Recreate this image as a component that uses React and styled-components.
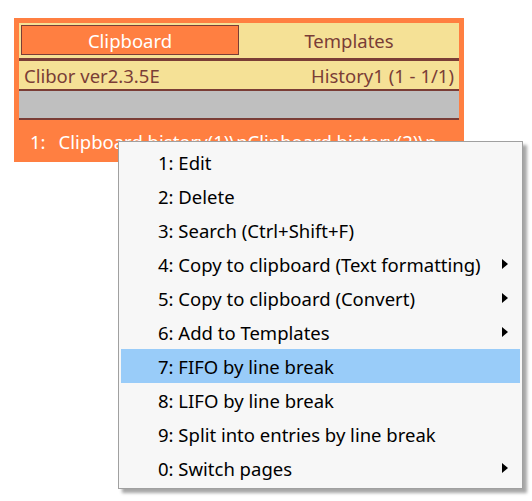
import React from 'react';
import styled, { createGlobalStyle } from 'styled-components';

const GlobalStyle = createGlobalStyle`
  body {
    margin: 0;
    background: #ffffff;
    font-family: "Noto Sans", "Liberation Sans", sans-serif;
  }
`;

const Page = styled.div`
  position: relative;
  width: 532px;
  height: 501px;
  padding: 18px 0 0 14px;
  box-sizing: border-box;
`;

const Window = styled.div`
  width: 450px;
  height: 144px;
  background: #ff7f41;
  padding: 5px 5px 0 5px;
  box-sizing: border-box;
  overflow: hidden;
`;

const TabRow = styled.div`
  display: grid;
  grid-template-columns: 218px 1fr;
  height: 35px;
  padding: 2px 0 3px 2px;
  box-sizing: border-box;
  background: #f5e196;
`;

const Tab = styled.div`
  display: flex;
  align-items: center;
  justify-content: center;
  font-size: 18.5px;
  color: ${p => (p.active ? '#ffffff' : '#7a3d36')};
  background: ${p => (p.active ? '#ff7f41' : 'transparent')};
  border: 1px solid ${p => (p.active ? '#7a3d36' : 'transparent')};
`;

const Rule = styled.div`
  height: ${p => p.h}px;
  background: #7a3d36;
`;

const InfoRow = styled.div`
  display: flex;
  justify-content: space-between;
  align-items: center;
  height: 28px;
  padding: 0 5px;
  background: #f5e196;
  color: #7a3d36;
  font-size: 18.5px;
`;

const SearchBar = styled.div`
  height: 27px;
  background: #bfbfbf;
`;

// first history entry; the context menu sits over its lower half
const Entry = styled.div`
  display: flex;
  gap: 13px;
  padding: 9px 0 0 11px;
  color: #ffffff;
  font-size: 18.5px;
  white-space: nowrap;
`;

const Menu = styled.div`
  position: absolute;
  left: 118px;
  top: 141px;
  width: 405px;
  padding: 3px 2px;
  box-sizing: border-box;
  background: #f7f7f7;
  border: 1px solid #a0a0a0;
  box-shadow: 4px 4px 3px rgba(0, 0, 0, 0.35);
`;

const Item = styled.div`
  display: flex;
  align-items: center;
  justify-content: space-between;
  height: 34px;
  padding: 0 12px 0 37px;
  font-size: 18.5px;
  color: #000000;
  background: ${p => (p.hover ? '#99ccf9' : 'transparent')};
`;

const Arrow = styled.span`
  width: 0;
  height: 0;
  border-top: 5px solid transparent;
  border-bottom: 5px solid transparent;
  border-left: 6px solid #000000;
`;

const items = [
  { label: '1: Edit' },
  { label: '2: Delete' },
  { label: '3: Search (Ctrl+Shift+F)' },
  { label: '4: Copy to clipboard (Text formatting)', sub: true },
  { label: '5: Copy to clipboard (Convert)', sub: true },
  { label: '6: Add to Templates', sub: true },
  { label: '7: FIFO by line break', hover: true },
  { label: '8: LIFO by line break' },
  { label: '9: Split into entries by line break' },
  { label: '0: Switch pages', sub: true },
];

export default function App() {
  return (
    <Page>
      <GlobalStyle />
      <Window>
        <TabRow>
          <Tab active>Clipboard</Tab>
          <Tab>Templates</Tab>
        </TabRow>
        <Rule h={3} />
        <InfoRow>
          <span>Clibor ver2.3.5E</span>
          <span>History1 (1 - 1/1)</span>
        </InfoRow>
        <Rule h={2} />
        <SearchBar />
        <Rule h={2} />
        <Entry>
          <span>1:</span>
          <span>Clipboard history(1)\nClipboard history(2)\n</span>
        </Entry>
      </Window>
      <Menu>
        {items.map(it => (
          <Item key={it.label} hover={it.hover}>
            <span>{it.label}</span>
            {it.sub && <Arrow />}
          </Item>
        ))}
      </Menu>
    </Page>
  );
}
